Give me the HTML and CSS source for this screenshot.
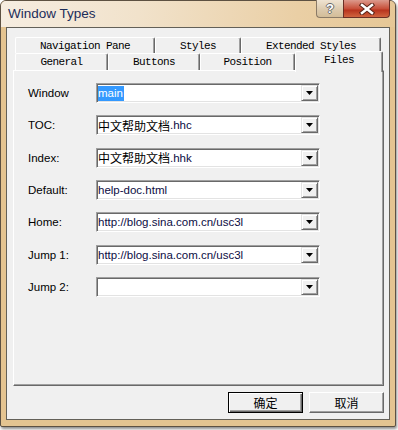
FILE: index.html
```html
<!DOCTYPE HTML>
<html>
	<head>
		<meta charset="utf-8">
		<link rel="stylesheet" href="styles.css">
	</head>
	<body>
		<div class="window">
			<div class="titlebar">
				<span class="title">Window Types</span>
				<div class="caption-buttons">
					<div class="cap-btn help">?</div>
					<div class="cap-btn close">
						<svg width="16" height="12" viewBox="0 0 16 12">
							<path d="M3 2 L13 10 M13 2 L3 10" stroke="#5a2418" stroke-width="4.5" stroke-linecap="square"/>
							<path d="M3 2 L13 10 M13 2 L3 10" stroke="#ffffff" stroke-width="2.5" stroke-linecap="square"/>
						</svg>
					</div>
				</div>
			</div>
			<div class="client">
				<div class="tabs">
					<div class="tab-row">
						<div class="tab tab-nav">Navigation Pane</div>
						<div class="tab tab-styles">Styles</div>
						<div class="tab tab-ext">Extended Styles</div>
					</div>
					<div class="tab-row">
						<div class="tab tab-general">General</div>
						<div class="tab tab-buttons">Buttons</div>
						<div class="tab tab-position">Position</div>
						<div class="tab tab-files selected">Files</div>
					</div>
				</div>
				<div class="panel">
					<div class="form">
						<div class="label">Window</div>
						<div class="combo">
							<div class="combo-text"><span class="selection">main</span></div>
							<div class="combo-arrow"><svg width="7" height="4" viewBox="0 0 7 4"><polygon points="0,0 7,0 3.5,4" fill="#000"/></svg></div>
						</div>

						<div class="label">TOC:</div>
						<div class="combo">
							<div class="combo-text"><span class="cn">中文帮助文档</span>.hhc</div>
							<div class="combo-arrow"><svg width="7" height="4" viewBox="0 0 7 4"><polygon points="0,0 7,0 3.5,4" fill="#000"/></svg></div>
						</div>

						<div class="label">Index:</div>
						<div class="combo">
							<div class="combo-text"><span class="cn">中文帮助文档</span>.hhk</div>
							<div class="combo-arrow"><svg width="7" height="4" viewBox="0 0 7 4"><polygon points="0,0 7,0 3.5,4" fill="#000"/></svg></div>
						</div>

						<div class="label">Default:</div>
						<div class="combo">
							<div class="combo-text">help-doc.html</div>
							<div class="combo-arrow"><svg width="7" height="4" viewBox="0 0 7 4"><polygon points="0,0 7,0 3.5,4" fill="#000"/></svg></div>
						</div>

						<div class="label">Home:</div>
						<div class="combo">
							<div class="combo-text">http://blog.sina.com.cn/usc3l</div>
							<div class="combo-arrow"><svg width="7" height="4" viewBox="0 0 7 4"><polygon points="0,0 7,0 3.5,4" fill="#000"/></svg></div>
						</div>

						<div class="label">Jump 1:</div>
						<div class="combo">
							<div class="combo-text">http://blog.sina.com.cn/usc3l</div>
							<div class="combo-arrow"><svg width="7" height="4" viewBox="0 0 7 4"><polygon points="0,0 7,0 3.5,4" fill="#000"/></svg></div>
						</div>

						<div class="label">Jump 2:</div>
						<div class="combo">
							<div class="combo-text"></div>
							<div class="combo-arrow"><svg width="7" height="4" viewBox="0 0 7 4"><polygon points="0,0 7,0 3.5,4" fill="#000"/></svg></div>
						</div>
					</div>
				</div>
				<div class="button-row">
					<div class="button default">确定</div>
					<div class="button">取消</div>
				</div>
			</div>
		</div>
	</body>
</html>
```

FILE: styles.css
```css
html{
	width: 100%;
	height: 100%;
}
body{
	margin: 0;
	width: 398px;
	height: 430px;
	overflow: hidden;
	background-color: #ffffff;
	font-family: 'Liberation Sans', Arial, sans-serif;
}
.window{
	width: 396px;
	height: 427px;
	box-sizing: border-box;
	border: 1px solid #5d5142;
	border-radius: 6px 6px 2px 2px;
	background-color: #e4c491;
	box-shadow: 1px 2px 3px rgba(0, 0, 0, 0.45);
	display: flex;
	flex-direction: column;
}
.titlebar{
	height: 26px;
	display: flex;
	align-items: flex-start;
	justify-content: space-between;
	border-radius: 5px 5px 0 0;
	background: linear-gradient(100deg, #f6ede1 0%, #f1e2cb 35%, #eacfa5 75%, #e6c796 100%);
}
.title{
	margin-left: 7px;
	margin-top: 5px;
	font-size: 13.5px;
	color: #1c2d5a;
}
.caption-buttons{
	display: flex;
	margin-right: 5px;
	margin-top: -1px;
}
.cap-btn{
	height: 18px;
	box-sizing: border-box;
	display: flex;
	align-items: center;
	justify-content: center;
	border: 1px solid #8a7a66;
	border-top: none;
}
.help{
	width: 27px;
	border-radius: 0 0 0 4px;
	border-right: none;
	background: linear-gradient(#efe3d2, #dccaae 55%, #d3bd98);
	color: #ffffff;
	font-weight: bold;
	font-size: 13px;
	text-shadow: 1px 0 #6a6a6a, -1px 0 #6a6a6a, 0 1px #6a6a6a, 0 -1px #6a6a6a;
}
.close{
	width: 47px;
	border-radius: 0 0 4px 0;
	border-color: #6b2f25;
	background: linear-gradient(#dc9a8c, #c8513c 50%, #b8341e 60%, #d0643e);
}
.client{
	flex: 1;
	margin: 0 5px 6px 5px;
	border: 1px solid #636058;
	background-color: #f0f0f0;
	display: flex;
	flex-direction: column;
	padding: 9px 5px 0 6px;
}
.tabs{
	display: flex;
	flex-direction: column;
	padding-left: 2px;
	font-family: 'Liberation Mono', monospace;
	font-size: 11px;
	letter-spacing: -0.6px;
	color: #000000;
}
.tab-row{
	display: flex;
}
.tab{
	box-sizing: border-box;
	height: 16px;
	display: flex;
	align-items: center;
	justify-content: center;
	background-color: #f0f0f0;
	border-top: 1px solid #ffffff;
	border-left: 1px solid #ffffff;
	border-right: 1px solid #696969;
	box-shadow: inset -1px 0 #a0a0a0;
	border-radius: 2px 2px 0 0;
}
.tab-row + .tab-row .tab{
	height: 17px;
}
.tab-nav{ width: 140px; }
.tab-styles{ width: 86px; }
.tab-ext{ width: 140px; }
.tab-general{ width: 93px; }
.tab-buttons{ width: 92px; }
.tab-position{ width: 95px; }
.tab-files{ width: 88px; }
.tab-row + .tab-row .tab.selected{
	position: relative;
	z-index: 1;
	height: 21px;
	margin-top: -2px;
	margin-bottom: -2px;
	padding-bottom: 4px;
}
.panel{
	height: 316px;
	box-sizing: border-box;
	border: 1px solid;
	border-color: #ffffff #696969 #696969 #ffffff;
	box-shadow: inset -1px -1px #a0a0a0;
}
.form{
	display: grid;
	grid-template-columns: 68px 224px;
	grid-auto-rows: 20px;
	row-gap: 12.33px;
	align-items: center;
	padding: 12px 0 0 14px;
	font-size: 11.5px;
}
.label{
	color: #000000;
}
.combo{
	height: 20px;
	box-sizing: border-box;
	display: flex;
	align-items: center;
	background-color: #ffffff;
	border: 1px solid;
	border-color: #a0a0a0 #ffffff #ffffff #a0a0a0;
	box-shadow: inset 1px 1px #696969, inset -1px -1px #e3e3e3;
	padding: 1px 1px 1px 1px;
}
.combo-text{
	flex: 1;
	height: 16px;
	display: flex;
	align-items: center;
	color: #0c0c44;
	white-space: nowrap;
	overflow: hidden;
}
.cn{
	font-family: 'Noto Sans CJK SC', sans-serif;
	font-size: 12px;
	color: #000000;
}
.selection{
	background-color: #3399ff;
	color: #ffffff;
	line-height: 15px;
	padding-right: 1px;
}
.combo-arrow{
	width: 17px;
	height: 16px;
	box-sizing: border-box;
	display: flex;
	align-items: center;
	justify-content: center;
	background-color: #f0f0f0;
	border: 1px solid;
	border-color: #e3e3e3 #696969 #696969 #e3e3e3;
	box-shadow: inset 1px 1px #ffffff, inset -1px -1px #a0a0a0;
}
.button-row{
	display: flex;
	justify-content: flex-end;
	gap: 6px;
	margin-top: 6px;
}
.button{
	width: 75px;
	height: 21px;
	box-sizing: border-box;
	display: flex;
	align-items: center;
	justify-content: center;
	background-color: #f0f0f0;
	border: 1px solid;
	border-color: #ffffff #696969 #696969 #ffffff;
	box-shadow: inset -1px -1px #a0a0a0;
	font-family: 'Noto Sans CJK SC', sans-serif;
	font-size: 12px;
	color: #000000;
}
.button.default{
	border-color: #000000;
	box-shadow: inset 1px 1px #ffffff, inset -1px -1px #696969, inset -2px -2px #a0a0a0;
}
```
